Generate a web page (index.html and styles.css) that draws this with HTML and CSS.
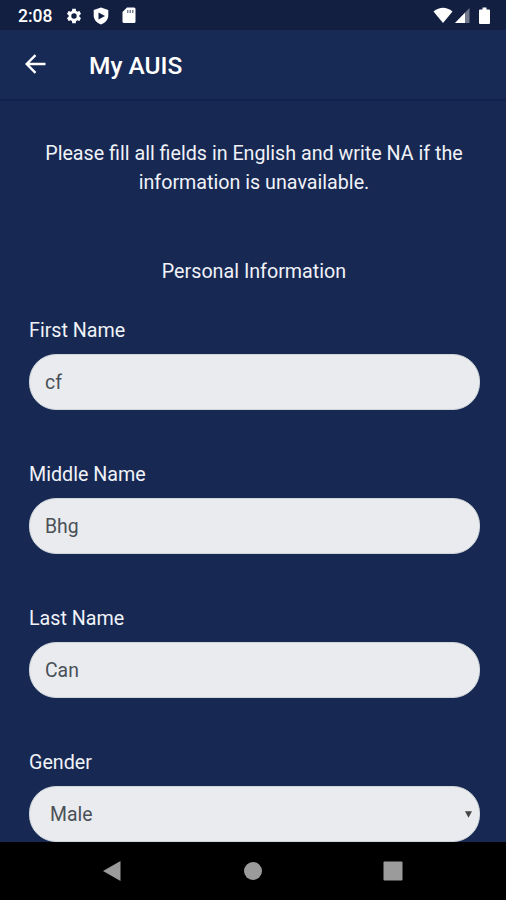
FILE: index.html
```html
<!DOCTYPE html>
<html lang="en">
<head>
<meta charset="utf-8">
<title>My AUIS</title>
<link rel="stylesheet" href="styles.css">
</head>
<body>
<div class="status">
  <span class="clock">2:08</span>
  <svg class="gear" width="18" height="18" viewBox="0 0 24 24"><path d="M19.14 12.94c.04-.3.06-.61.06-.94 0-.32-.02-.64-.07-.94l2.03-1.58c.18-.14.23-.41.12-.61l-1.92-3.32c-.12-.22-.37-.29-.59-.22l-2.39.96c-.5-.38-1.03-.7-1.62-.94l-.36-2.54c-.04-.24-.24-.41-.48-.41h-3.84c-.24 0-.43.17-.47.41l-.36 2.54c-.59.24-1.13.57-1.62.94l-2.39-.96c-.22-.08-.47 0-.59.22L2.74 8.87c-.12.21-.08.47.12.61l2.03 1.58c-.05.3-.09.63-.09.94s.02.64.07.94l-2.03 1.58c-.18.14-.23.41-.12.61l1.92 3.32c.12.22.37.29.59.22l2.39-.96c.5.38 1.03.7 1.62.94l.36 2.54c.05.24.24.41.48.41h3.84c.24 0 .44-.17.47-.41l.36-2.54c.59-.24 1.13-.56 1.62-.94l2.39.96c.22.08.47 0 .59-.22l1.92-3.32c.12-.22.07-.47-.12-.61l-2.01-1.58zM12 15.6A3.6 3.6 0 1 1 12 8.400a3.600 3.600 0 0 1 0 7.200z"/></svg>
  <svg class="shield" width="16" height="18" viewBox="0 0 16 18"><path fill-rule="evenodd" d="M8 .6 15.300 3v5.500c0 4-3 7.400-7.300 8.900C3.700 15.900.7 12.500.7 8.500V3zM5.500 5.400v7.200L12 9z"/></svg>
  <svg class="card" width="14" height="17" viewBox="0 0 14 17"><path fill-rule="evenodd" d="M5 .5h7q1.500 0 1.500 1.500v12.500q0 1.500-1.500 1.500H2q-1.500 0-1.500-1.500V5z"/><path class="pins" d="M5 3v3h1.500V3zm2.500 0v3H9V3zM10 3v3h1.500V3z"/></svg>
  <span class="spacer"></span>
  <svg width="20" height="17" viewBox="0 0 20 17"><path d="M.5 4.500Q10-3 19.500 4.500L10 16z"/></svg>
  <svg class="signal" width="15" height="17" viewBox="0 0 15 17"><path opacity=".4" d="M14.500 1v15H0z"/><path d="M10 5.700V16H0z"/></svg>
  <svg class="battery" width="11" height="18" viewBox="0 0 11 18"><path d="M3.500.5h4v2H10q1 0 1 1V16q0 1-1 1H1q-1 0-1-1V3.500q0-1 1-1h2.500z"/></svg>
</div>
<header class="bar">
  <svg class="back" width="22" height="20" viewBox="0 0 22 20"><path d="M20.500 10H2M10.500 1.200 1.700 10l8.800 8.800"/></svg>
  <h1>My AUIS</h1>
</header>
<main>
  <p class="intro">Please fill all fields in English and write NA if the information is unavailable.</p>
  <h2>Personal Information</h2>
  <div class="field"><label for="first">First Name</label><input id="first" value="cf"></div>
  <div class="field"><label for="middle">Middle Name</label><input id="middle" value="Bhg"></div>
  <div class="field"><label for="last">Last Name</label><input id="last" value="Can"></div>
  <div class="field"><label>Gender</label><div class="select"><span>Male</span><svg width="7" height="7" viewBox="0 0 7 7"><path d="M0 .3h7L3.500 6.800z"/></svg></div></div>
</main>
<nav>
  <svg width="20" height="22" viewBox="0 0 20 22"><path d="M18.500 1v20L1 11z"/></svg>
  <svg width="20" height="20" viewBox="0 0 20 20"><circle cx="10" cy="10" r="9"/></svg>
  <svg width="20" height="20" viewBox="0 0 20 20"><rect x=".5" y=".5" width="19" height="19" rx="1"/></svg>
</nav>
</body>
</html>
```
FILE: styles.css
```css
* { box-sizing: border-box; }
body {
  margin: 0;
  height: 900px;
  overflow: hidden;
  display: flex;
  flex-direction: column;
  background: #172953;
  color: #f0f2f8;
  font: 19.7px/29px Roboto, sans-serif;
}
svg { display: block; flex: none; }
.status {
  flex: none;
  height: 30px;
  padding: 1px 16px 0 18px;
  display: flex;
  align-items: center;
  background: #121f40;
  fill: #fff;
}
.clock { width: 47px; padding-top: 1px; font-size: 17.5px; font-weight: 500; color: #fff; }
.shield { margin-left: 10px; }
.card { margin-left: 13px; }
.pins { fill: #7c8498; }
.spacer { flex: 1; }
.signal { margin-left: 2px; }
.battery { margin-left: 9px; }
.bar {
  flex: none;
  height: 71px;
  padding: 0 24px 1px 25px;
  display: flex;
  align-items: center;
  border-bottom: 2px solid #12224a;
  background: #172955;
}
.back { fill: none; stroke: #fff; stroke-width: 2.4; }
h1 { margin: 3px 0 0 42px; font-size: 24.5px; font-weight: 500; color: #fff; }
main { flex: 1; min-height: 0; overflow: hidden; padding: 38px 27px 0 29px; }
.intro { margin: 0; text-align: center; }
h2 { margin: 60px 0 30px; font-size: inherit; font-weight: 400; text-align: center; }
.field { height: 144px; }
label { display: block; margin-bottom: 9px; }
input, .select {
  display: flex;
  align-items: center;
  width: 451px;
  height: 56px;
  padding: 0 15px;
  border: 1px solid #ced4da;
  border-radius: 27px;
  background: #e9ebee;
  color: #495057;
  font: inherit;
  font-size: 19.4px;
}
.select { padding: 1px 7px 0 20px; justify-content: space-between; fill: #444; }
nav {
  flex: none;
  height: 58px;
  padding: 0 103px 0 102px;
  display: flex;
  align-items: center;
  justify-content: space-between;
  background: #000;
  fill: #9b9b9b;
}
```
